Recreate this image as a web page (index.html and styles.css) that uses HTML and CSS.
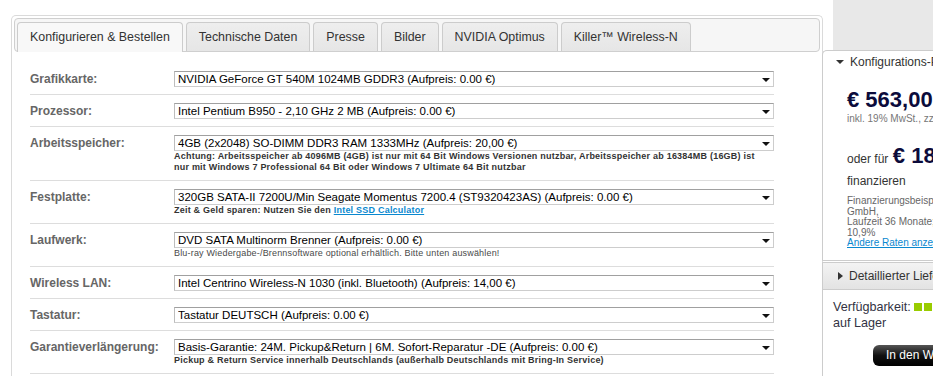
FILE: index.html
```html
<!DOCTYPE html>
<html lang="de">

<head>
    <meta charset="UTF-8">
    <meta name="viewport" content="width=device-width, initial-scale=1.0">
    <title>Konfigurieren &amp; Bestellen</title>
    <link rel="stylesheet" href="styles.css">
</head>

<body>
    <div class="page">
        <div class="main">
            <ul class="tabs">
                <li class="tab active">Konfigurieren &amp; Bestellen</li>
                <li class="tab">Technische Daten</li>
                <li class="tab">Presse</li>
                <li class="tab">Bilder</li>
                <li class="tab">NVIDIA Optimus</li>
                <li class="tab">Killer™ Wireless-N</li>
            </ul>

            <form class="config" action="#">
                <div class="row">
                    <label class="row-label" for="gpu">Grafikkarte:</label>
                    <div class="row-field">
                        <div class="select-wrap">
                            <select id="gpu" class="select"><option>NVIDIA GeForce GT 540M 1024MB GDDR3 (Aufpreis: 0.00 €)</option></select>
                        </div>
                    </div>
                </div>
                <div class="row">
                    <label class="row-label" for="cpu">Prozessor:</label>
                    <div class="row-field">
                        <div class="select-wrap">
                            <select id="cpu" class="select"><option>Intel Pentium B950 - 2,10 GHz 2 MB (Aufpreis: 0.00 €)</option></select>
                        </div>
                    </div>
                </div>
                <div class="row">
                    <label class="row-label" for="ram">Arbeitsspeicher:</label>
                    <div class="row-field">
                        <div class="select-wrap">
                            <select id="ram" class="select"><option>4GB (2x2048) SO-DIMM DDR3 RAM 1333MHz (Aufpreis: 20,00 €)</option></select>
                        </div>
                        <p class="note">Achtung: Arbeitsspeicher ab 4096MB (4GB) ist nur mit 64 Bit Windows Versionen nutzbar, Arbeitsspeicher ab 16384MB (16GB) ist<br>nur mit Windows 7 Professional 64 Bit oder Windows 7 Ultimate 64 Bit nutzbar</p>
                    </div>
                </div>
                <div class="row">
                    <label class="row-label" for="hdd">Festplatte:</label>
                    <div class="row-field">
                        <div class="select-wrap">
                            <select id="hdd" class="select"><option>320GB SATA-II 7200U/Min Seagate Momentus 7200.4 (ST9320423AS) (Aufpreis: 0.00 €)</option></select>
                        </div>
                        <p class="note">Zeit &amp; Geld sparen: Nutzen Sie den <a href="#">Intel SSD Calculator</a></p>
                    </div>
                </div>
                <div class="row">
                    <label class="row-label" for="odd">Laufwerk:</label>
                    <div class="row-field">
                        <div class="select-wrap">
                            <select id="odd" class="select"><option>DVD SATA Multinorm Brenner (Aufpreis: 0.00 €)</option></select>
                        </div>
                        <p class="note note-light">Blu-ray Wiedergabe-/Brennsoftware optional erhältlich. Bitte unten auswählen!</p>
                    </div>
                </div>
                <div class="row">
                    <label class="row-label" for="wlan">Wireless LAN:</label>
                    <div class="row-field">
                        <div class="select-wrap">
                            <select id="wlan" class="select"><option>Intel Centrino Wireless-N 1030 (inkl. Bluetooth) (Aufpreis: 14,00 €)</option></select>
                        </div>
                    </div>
                </div>
                <div class="row">
                    <label class="row-label" for="kbd">Tastatur:</label>
                    <div class="row-field">
                        <div class="select-wrap">
                            <select id="kbd" class="select"><option>Tastatur DEUTSCH (Aufpreis: 0.00 €)</option></select>
                        </div>
                    </div>
                </div>
                <div class="row">
                    <label class="row-label" for="warranty">Garantieverlängerung:</label>
                    <div class="row-field">
                        <div class="select-wrap">
                            <select id="warranty" class="select"><option>Basis-Garantie: 24M. Pickup&amp;Return | 6M. Sofort-Reparatur -DE (Aufpreis: 0.00 €)</option></select>
                        </div>
                        <p class="note">Pickup &amp; Return Service innerhalb Deutschlands (außerhalb Deutschlands mit Bring-In Service)</p>
                    </div>
                </div>
            </form>
        </div>

        <div class="side">
            <div class="side-top"></div>
            <div class="price-box">
                <div class="price-head"><span class="arrow-down"></span>Konfigurations-Preis</div>
                <div class="price-body">
                    <div class="price">€ 563,00</div>
                    <div class="tax">inkl. 19% MwSt., zzgl. Versand</div>
                    <div class="rate"><span class="rate-pre">oder für</span> <span class="price">€ 18,46</span></div>
                    <div class="rate-post">finanzieren</div>
                    <div class="finance">
                        Finanzierungsbeispiel der Santander Bank<br>
                        GmbH,<br>
                        Laufzeit 36 Monate; eff. Jahreszins<br>
                        10,9%<br>
                        <a href="#">Andere Raten anzeigen</a>
                    </div>
                </div>
            </div>
            <div class="delivery"><span class="arrow-right"></span>Detaillierter Lieferstatus</div>
            <div class="stock">
                <div class="stock-line">Verfügbarkeit: <span class="dots"><i></i><i></i><i></i><i></i></span></div>
                <div class="stock-line">auf Lager</div>
                <button class="cart" type="button">In den Warenkorb</button>
            </div>
        </div>
    </div>
</body>

</html>
```

FILE: styles.css
```css
body {
    margin: 0;
    padding: 0;
    font-family: "Liberation Sans", Arial, sans-serif;
    color: #333;
    background-color: #ffffff;
    overflow: hidden;
}

.page {
    display: flex;
    align-items: flex-start;
    padding-left: 11px;
    width: 1200px;
}

/* left column */

.main {
    flex: 0 0 812px;
    box-sizing: border-box;
    min-height: 420px;
    margin-top: 15px;
    padding: 2px 2px 0;
    border: 1px solid #dadada;
    border-bottom: none;
    border-radius: 5px 5px 0 0;
}

.tabs {
    display: flex;
    align-items: flex-start;
    gap: 3px;
    box-sizing: border-box;
    height: 34px;
    margin: 0;
    padding: 3px 2px 0;
    list-style: none;
    background-color: #f6f6f6;
    border: 1px solid #cfcfcf;
    border-radius: 4px;
}

.tab {
    box-sizing: border-box;
    height: 29px;
    padding: 0 12px;
    line-height: 28px;
    font-size: 12.4px;
    color: #333;
    background: linear-gradient(#eeeeee, #e6e6e6);
    border: 1px solid #cccccc;
    border-bottom: none;
    border-radius: 4px 4px 0 0;
}

.tab.active {
    height: 30px;
    background: #f8f8f8;
}

.config {
    width: 744px;
    margin: 11px 0 0 16px;
}

.row {
    display: flex;
    padding: 8px 0 7px;
    border-bottom: 1px solid #dddddd;
}

.row-label {
    width: 144px;
    flex-shrink: 0;
    font-size: 12px;
    font-weight: bold;
    line-height: 16px;
    color: #666;
}

.row-field {
    width: 600px;
}

.select-wrap {
    position: relative;
}

.select-wrap::after {
    content: "";
    position: absolute;
    right: 4px;
    top: 7px;
    border-left: 4px solid transparent;
    border-right: 4px solid transparent;
    border-top: 4px solid #111;
    pointer-events: none;
}

.select {
    display: block;
    box-sizing: border-box;
    width: 100%;
    height: 16px;
    margin: 0;
    padding: 0 3px;
    font-family: "Liberation Sans", Arial, sans-serif;
    font-size: 11.5px;
    color: #000;
    background-color: #fff;
    border: 1px solid #cdcdcd;
    border-top-color: #a0a0a0;
    border-left-color: #bdbdbd;
    border-radius: 0;
    appearance: none;
    -webkit-appearance: none;
    outline: none;
}

.note {
    margin: 0;
    font-size: 9px;
    font-weight: bold;
    letter-spacing: 0.22px;
    line-height: 11px;
    color: #333;
    white-space: nowrap;
}

.note a {
    color: #0a88cf;
}

.note-light {
    font-weight: normal;
    letter-spacing: 0.18px;
    color: #4a4a4a;
}

/* right column */

.side {
    flex: 0 0 240px;
    margin-left: -1px;
}

.side-top {
    height: 50px;
    margin-left: 11px;
    background-color: #e8e8e8;
}

.price-box {
    border: 1px solid #cccccc;
    border-right: none;
    border-radius: 5px 0 0 0;
    padding-bottom: 11px;
    white-space: nowrap;
}

.price-head {
    display: flex;
    align-items: center;
    gap: 6px;
    height: 22px;
    padding-left: 13px;
    font-size: 12px;
    color: #333;
}

.arrow-down {
    border-left: 4px solid transparent;
    border-right: 4px solid transparent;
    border-top: 4px solid #333;
}

.arrow-right {
    display: inline-block;
    margin-right: 6px;
    border-top: 4px solid transparent;
    border-bottom: 4px solid transparent;
    border-left: 5px solid #333;
}

.price-body {
    padding: 14px 0 0 24px;
}

.price {
    font-size: 22px;
    font-weight: bold;
    line-height: 26px;
    color: #0b0b3b;
}

.tax {
    font-size: 10px;
    line-height: 12px;
    color: #777;
}

.rate {
    margin-top: 18px;
    line-height: 26px;
}

.rate-pre {
    font-size: 12px;
    color: #333;
}

.rate-post {
    margin-top: 2px;
    font-size: 12px;
    line-height: 14px;
    color: #333;
}

.finance {
    margin-top: 8px;
    font-size: 10px;
    line-height: 10.5px;
    color: #666;
}

.finance a {
    color: #0a88cf;
}

.delivery {
    display: flex;
    align-items: center;
    box-sizing: border-box;
    height: 28px;
    margin-top: 1px;
    padding-left: 15px;
    font-size: 12px;
    color: #333;
    white-space: nowrap;
    background: linear-gradient(#f3f3f3, #e3e3e3);
    border: 1px solid #cccccc;
    border-right: none;
}

.stock {
    min-height: 120px;
    padding: 9px 0 0 10px;
    border-left: 1px solid #cccccc;
}

.stock-line {
    font-size: 12.6px;
    line-height: 16px;
    color: #334;
    white-space: nowrap;
}

.dots i {
    display: inline-block;
    width: 8px;
    height: 8px;
    margin-right: 2px;
    background-color: #99cc00;
}

.cart {
    display: block;
    height: 21px;
    margin: 14px 0 0 40px;
    padding: 0 13px;
    font-family: "Liberation Sans", Arial, sans-serif;
    font-size: 12px;
    color: #fff;
    white-space: nowrap;
    background: linear-gradient(#555 0%, #111 50%, #000 100%);
    border: none;
    border-radius: 6px;
}
```
